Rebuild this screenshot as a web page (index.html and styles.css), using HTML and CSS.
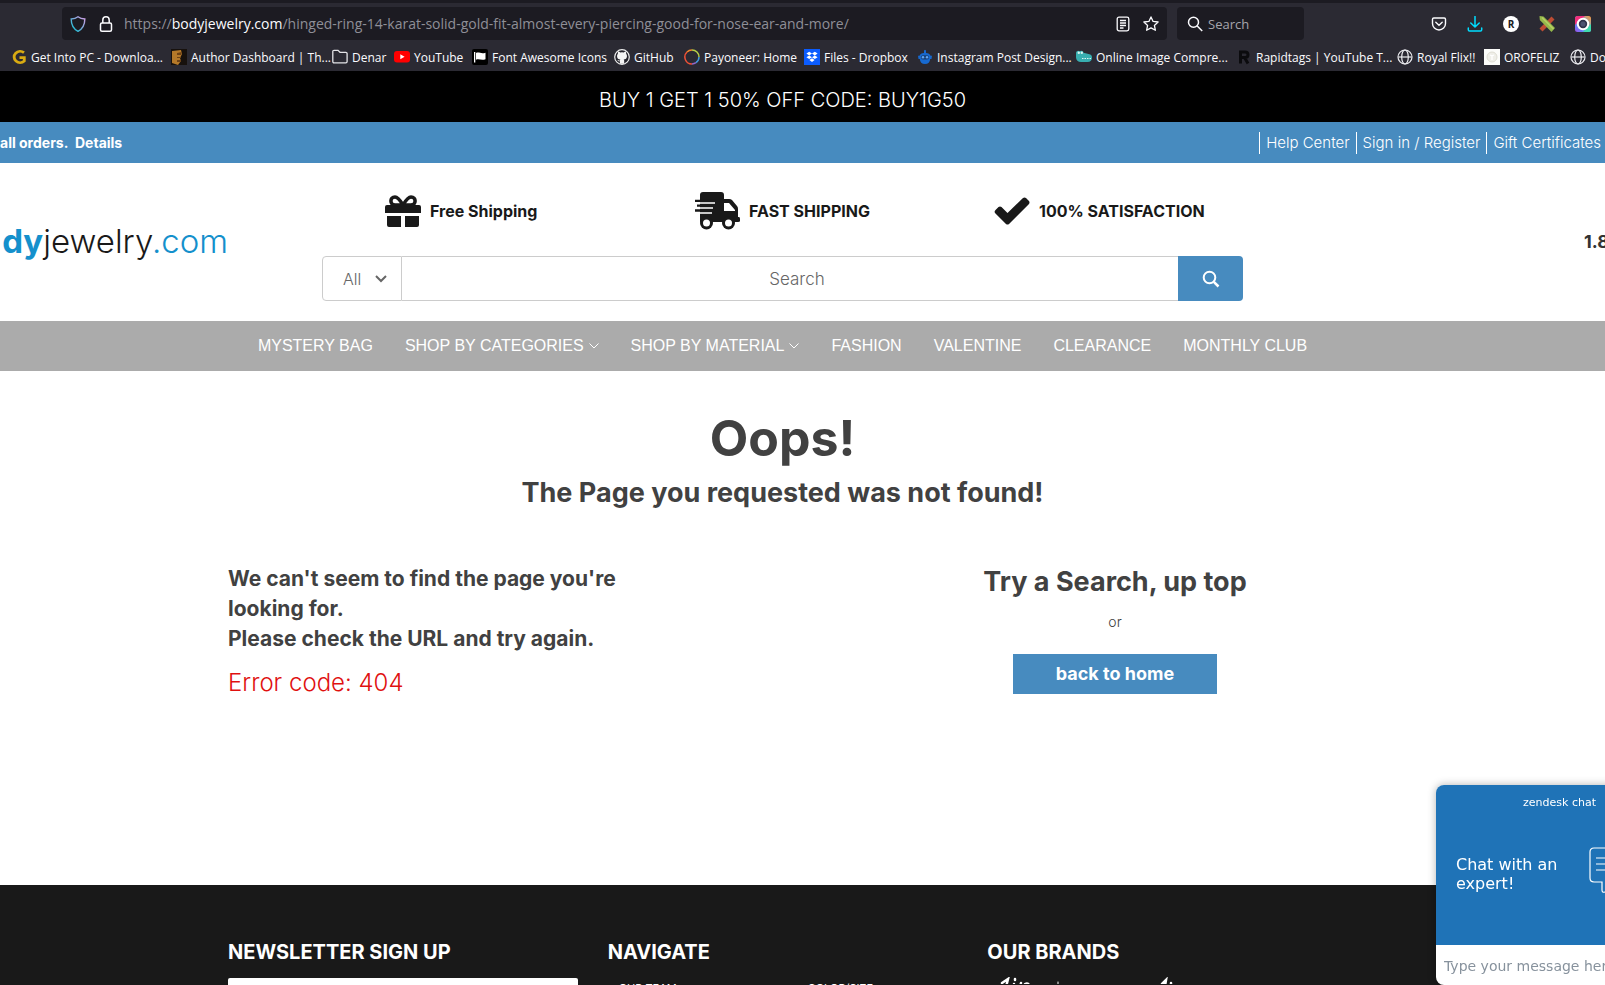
FILE: index.html
```html
<!DOCTYPE html>
<html lang="en">
<head>
<meta charset="utf-8">
<title>bodyjewelry.com - Page not found</title>
<link rel="stylesheet" href="styles.css">
</head>
<body>
<div class="browser">
  <div class="toolbar">
    <div class="urlbar">
      <svg class="i16" viewBox="0 0 16 16" fill="none" stroke-width="1.4"><defs><linearGradient id="sh" x1="0" y1="1" x2="1" y2="0"><stop offset="0" stop-color="#00c8d7"/><stop offset=".55" stop-color="#7fa8d8"/><stop offset="1" stop-color="#d9a0e8"/></linearGradient></defs><path stroke="url(#sh)" d="M8 .8C6 2.3 3.700 2.900 1.200 3c0 5.500 1.700 9.700 6.800 12.300C13.100 12.700 14.800 8.500 14.800 3 12.300 2.900 10 2.300 8 .8z"/></svg>
      <svg class="i16" viewBox="0 0 16 16" fill="none" stroke="#fbfbfe" stroke-width="1.500"><rect x="2.500" y="7" width="11" height="8.200" rx="1.500"/><path d="M4.800 7V4a3.200 3.200 0 0 1 6.400 0v3"/></svg>
      <span class="url">https://<b>bodyjewelry.com</b>/hinged-ring-14-karat-solid-gold-fit-almost-every-piercing-good-for-nose-ear-and-more/</span>
      <button class="ib" aria-label="Reader view"><svg class="i16" viewBox="0 0 16 16" fill="none" stroke="#fbfbfe" stroke-width="1.300"><rect x="2.200" y="1.200" width="11.600" height="13.600" rx="1.800"/><path d="M5 4.500h6M5 7h6M5 9.500h6M5 12h3.500"/></svg></button>
      <button class="ib" aria-label="Bookmark this page"><svg class="i16" viewBox="0 0 16 16" fill="none" stroke="#fbfbfe" stroke-width="1.300" stroke-linejoin="round"><path d="M8 .9l2.100 4.500 5 .6-3.700 3.400 1 4.900L8 11.900l-4.400 2.400 1-4.900L.9 6l5-.6z"/></svg></button>
    </div>
    <label class="quick">
      <svg class="i16" viewBox="0 0 16 16" fill="none" stroke="#fbfbfe" stroke-width="1.500"><circle cx="6.500" cy="6.300" r="5"/><path d="M10.200 10l5 5"/></svg>
      <input type="text" placeholder="Search" aria-label="Search the web">
    </label>
    <div class="tools">
      <button class="ib" aria-label="Pocket"><svg class="i16" viewBox="0 0 16 16" fill="none" stroke="#fbfbfe" stroke-width="1.400" stroke-linecap="round"><path d="M2.800 2h10.400c.8 0 1.300.5 1.300 1.300v4.200a6.500 6.500 0 0 1-13 0V3.300C1.500 2.500 2 2 2.800 2z"/><path d="M4.800 6.200L8 9.200l3.200-3"/></svg></button>
      <button class="ib" aria-label="Downloads"><svg class="i16" viewBox="0 0 16 16" fill="none" stroke="#00ddff" stroke-width="1.500" stroke-linecap="round" stroke-linejoin="round"><path d="M8 .5v10.300M3.800 7L8 11l4.200-4M1.300 12v1.800c0 .8.500 1.300 1.300 1.300h10.800c.8 0 1.300-.5 1.300-1.300V12"/></svg></button>
      <button class="ib badge" aria-label="Account">R</button>
      <button class="ib" aria-label="Design extension"><svg class="i16" viewBox="0 0 16 16"><path d="M.5 12.500L12.500.5l3 3-12 12z" fill="#bd4c33"/><path d="M.5 0l4 .5 11.500 11.500-3.500 4L.8 4z" fill="#95b84b"/><path d="M3 1.500l11.500 11.500" stroke="#b7cf62" stroke-width="1.500"/></svg></button>
      <button class="ib" aria-label="Camera extension"><svg class="i16" viewBox="0 0 16 16"><defs><linearGradient id="cam" x1="0" y1="1" x2="1" y2="0"><stop offset="0" stop-color="#a04be8"/><stop offset=".4" stop-color="#4aa2ff"/><stop offset="1" stop-color="#ff9c3b"/></linearGradient></defs><rect width="16" height="16" rx="2.500" fill="url(#cam)"/><path d="M0 9V2.500Q0 0 2.500 0H10z" fill="#f0307c"/><path d="M16 8v5.500q0 2.500-2.500 2.500H8z" fill="#3fdcae"/><circle cx="8" cy="8" r="5.200" fill="#30334c" stroke="#fff" stroke-width="2"/><circle cx="8" cy="8" r="2.500" fill="#4c5270"/></svg></button>
    </div>
  </div>
  <nav class="bookmarks" aria-label="Bookmarks">
    <a href="#"><svg class="i16" viewBox="0 0 16 16" fill="none" stroke="#d9ab12" stroke-width="2.800"><path d="M13 3.700A6 5.600 0 1 0 13.300 12V8.600H8.500"/></svg>Get Into PC - Downloa...</a>
    <a href="#"><svg class="i16" viewBox="0 0 16 16"><path fill="#17110d" d="M0 0h16v16H0z"/><path fill="#b57929" d="M1 2l9-1 1 4-2 4 1 3-3 4-6-2z"/><path fill="#6e4215" d="M6 4l5-1-1 3H6zM6 8h4v1H6zM6 11h4v2H6z"/></svg>Author Dashboard | Th...</a>
    <a href="#"><svg class="i16" viewBox="0 0 16 16" fill="none" stroke="#e4e4e8" stroke-width="1.300"><path d="M.8 4V2.500C.8 1.800 1.300 1.300 2 1.300h4l2 2h5.800c.8 0 1.300.5 1.300 1.200v8c0 .8-.5 1.300-1.300 1.300H2c-.7 0-1.200-.5-1.200-1.300z"/></svg>Denar</a>
    <a href="#"><svg class="i16" viewBox="0 0 16 16"><rect y="2" width="16" height="11.500" rx="3" fill="#f00"/><path fill="#fff" d="M6.300 5.300v5L10.600 7.800z"/></svg>YouTube</a>
    <a href="#"><svg class="i16" viewBox="0 0 16 16"><rect width="16" height="16" rx="2" fill="#000"/><path fill="#fff" d="M2 3h1.300v10.500H2zM4 4c3-1.500 5 1.400 9.500-.3v6.500C9.500 12 7 9.200 4 10.800z"/></svg>Font Awesome Icons</a>
    <a href="#"><svg class="i16" viewBox="0 0 16 16"><circle cx="8" cy="8" r="7.300" fill="#25242c" stroke="#eee" stroke-width="1.200"/><path fill="#f4f4f4" d="M5.900 14.800v-2.500c-1.700.3-2-.8-2.500-1.300 1-.2 1.300 1 2.500.6 0-.4.200-.8.500-1-2-.3-3.400-1.200-3.400-3.700 0-.9.400-1.600.9-2.200-.2-.7-.1-1.500.2-2.100.9 0 1.600.5 2.200.9a8 8 0 0 1 3.400 0c.6-.4 1.300-.9 2.200-.9.300.6.400 1.400.2 2.100.5.600.9 1.300.9 2.200 0 2.500-1.400 3.400-3.400 3.700.4.300.6.800.6 1.500v2.700z"/></svg>GitHub</a>
    <a href="#"><svg class="i16" viewBox="0 0 16 16" fill="none" stroke-width="1.500"><path stroke="#ef5136" d="M8 15A7 7 0 0 1 3 3"/><path stroke="#f0872d" d="M3 3a7 7 0 0 1 5-2"/><path stroke="#b6cf46" d="M8 1a7 7 0 0 1 7 7"/><path stroke="#419bde" d="M15 8a7 7 0 0 1-3 5.700"/><path stroke="#8f68c8" d="M12 13.700A7 7 0 0 1 8 15"/></svg>Payoneer: Home</a>
    <a href="#"><svg class="i16" viewBox="0 0 16 16"><path fill="#0b5cff" d="M0 0h16v16H0z"/><path fill="#fff" d="M5.200 2.800L8 4.600 5.200 6.400 2.400 4.600zM10.800 2.800l2.800 1.800-2.800 1.800L8 4.600zM5.200 6.400L8 8.200 5.200 10 2.400 8.200zM10.800 6.400l2.800 1.800-2.800 1.800L8 8.200zM8 9.300l2.600 1.800L8 13l-2.600-1.900z"/></svg>Files - Dropbox</a>
    <a href="#"><svg class="i16" viewBox="0 0 16 16"><path fill="#1769d0" d="M7 1.500L8 .8l1 .7V4c2.500 0 4 1.300 4.500 2.800H15L14.500 10h-1.300c-.2 3-2 5-5.200 5s-5-2-5.200-5H1.500L1 6.800h1.500C3 5.300 4.500 4 7 4z"/><rect x="4" y="6.200" width="8" height="4.200" rx="2" fill="#194178"/><circle cx="6" cy="8.300" r="1.200" fill="#5fa4f3"/><circle cx="10" cy="8.300" r="1.200" fill="#5fa4f3"/></svg>Instagram Post Design...</a>
    <a href="#"><svg class="i16" viewBox="0 0 16 16"><path fill="#38aeb0" d="M0 4c0-2 2-3 3.500-1.800C5.500 1 7.500 2 7.500 3.800l6 1.400c2 .5 2.500 1.800 2.500 3.300 0 2.800-1.500 4.500-4.500 4.500H5C2 13 0 11 0 8.500z"/><circle cx="2.800" cy="3.800" r="1.200" fill="#d9f5f2"/><circle cx="5.800" cy="3.800" r="1.200" fill="#d9f5f2"/><path d="M6 9.500h9" stroke="#d9f5f2" stroke-dasharray="1.500 1"/></svg>Online Image Compre...</a>
    <a href="#"><svg class="i16" viewBox="0 0 16 16" fill="none" stroke="#0b0b0e" stroke-width="3"><path d="M4.500 14.500V3H9c4 0 4 5.500 0 5.500H5M8.500 8.500l3.500 6"/></svg>Rapidtags | YouTube T...</a>
    <a href="#"><svg class="i16" viewBox="0 0 16 16" fill="none" stroke="#ececf0" stroke-width="1.200"><circle cx="8" cy="8" r="7"/><ellipse cx="8" cy="8" rx="3.300" ry="7"/><path d="M1.500 8h13"/></svg>Royal Flix!!</a>
    <a href="#"><svg class="i16" viewBox="0 0 16 16" fill="none"><path fill="#fcfcfa" d="M0 0h16v16H0z"/><circle cx="8" cy="8" r="5" fill="#efeee8" stroke="#dfddd3"/><path stroke="#fff" stroke-width="1.300" d="M6 6l2 1v4M8 7l2-1"/></svg>OROFELIZ</a>
    <a href="#"><svg class="i16" viewBox="0 0 16 16" fill="none" stroke="#ececf0" stroke-width="1.200"><circle cx="8" cy="8" r="7"/><ellipse cx="8" cy="8" rx="3.300" ry="7"/><path d="M1.500 8h13"/></svg>Do</a>
  </nav>
</div>

<div class="promo">BUY 1 GET 1 50% OFF CODE: BUY1G50</div>
<div class="topbar">
  <p>all orders.&nbsp; <a href="#">Details</a></p>
  <nav class="account" aria-label="Account">
    <a href="#">Help Center</a><a href="#">Sign in / Register</a><a href="#">Gift Certificates</a>
  </nav>
</div>

<header class="header">
  <a class="logo" href="#"><b>dy</b><span>jewelry</span>.com</a>
  <div class="middle">
    <ul class="perks">
      <li><svg width="36" height="32" viewBox="0 0 36 32"><path fill="#191919" d="M2 10h32q2 0 2 2v6H0v-6q0-2 2-2zM2 21h14v11H4q-2 0-2-2zM20 21h14v9q0 2-2 2H20z"/><path fill="none" stroke="#191919" stroke-width="3.500" d="M18 10C15 5 12.500 2 10 2 4.500 2 4.500 10 10 10h16c5.500 0 5.500-8 0-8-2.500 0-5 3-8 8z"/></svg>Free Shipping</li>
      <li><svg width="45" height="38" viewBox="0 0 45 38"><path fill="#191919" d="M8 0h18q3 0 3 3v4h5q2 0 3 1l5 6q1 1 1 3v8h1q1 0 1 2v2q0 1-2 1h-2H5V3q0-3 3-3z"/><circle cx="11.500" cy="31" r="6.500" fill="#191919"/><circle cx="33.500" cy="31" r="6.500" fill="#191919"/><path fill="#fff" d="M29 11h5l6 7v1H29z"/><circle cx="11.500" cy="31" r="3.500" fill="#fff"/><circle cx="33.500" cy="31" r="3.500" fill="#fff"/><path stroke="#fff" stroke-width="1.700" d="M0 11h20M0 16h18M0 21h17"/><path stroke="#191919" stroke-width="2.300" d="M0 8.800h21M2 13.600h18M0 18.500h17"/></svg>FAST SHIPPING</li>
      <li><svg width="36" height="28" viewBox="0 0 36 28"><path fill="#191919" d="M1.500 13l3-3q1.500-1 3 0l6 6L29 1q1.500-1 3 0l3 3q1 1.500 0 3L15 27q-1.500 1-3 0L1 16q-1-1.500.5-3z"/></svg>100% SATISFACTION</li>
    </ul>
    <form class="search">
      <div class="scope">
        <select aria-label="Category"><option>All</option></select>
        <svg width="12" height="8" viewBox="0 0 12 8" fill="none" stroke="#666" stroke-width="2"><path d="M1 1l5 5 5-5"/></svg>
      </div>
      <input type="search" placeholder="Search" aria-label="Search products">
      <button type="button" aria-label="Search"><svg width="18" height="18" viewBox="0 0 18 18" fill="none" stroke="#fff" stroke-width="2"><circle cx="7.500" cy="7.500" r="5.800"/><path stroke-width="2.500" d="M11.800 11.800l4.700 4.700"/></svg></button>
    </form>
  </div>
  <strong class="phone">1.8</strong>
</header>

<nav class="menu" aria-label="Main">
  <a href="#">MYSTERY BAG</a>
  <a href="#">SHOP BY CATEGORIES<svg width="10" height="6" viewBox="0 0 10 6" fill="none" stroke="#fff"><path d="M.5.5L5 5 9.500.5"/></svg></a>
  <a href="#">SHOP BY MATERIAL<svg width="10" height="6" viewBox="0 0 10 6" fill="none" stroke="#fff"><path d="M.5.5L5 5 9.500.5"/></svg></a>
  <a href="#">FASHION</a>
  <a href="#">VALENTINE</a>
  <a href="#">CLEARANCE</a>
  <a href="#">MONTHLY CLUB</a>
</nav>

<main class="main">
  <h1>Oops!</h1>
  <h2>The Page you requested was not found!</h2>
  <div class="cols">
    <section class="reason">
      <h3>We can't seem to find the page you're<br>looking for.<br>Please check the URL and try again.</h3>
      <p>Error code: 404</p>
    </section>
    <section class="next">
      <h2>Try a Search, up top</h2>
      <p>or</p>
      <a class="home" href="#">back to home</a>
    </section>
  </div>
</main>

<footer class="footer">
  <section>
    <h4>NEWSLETTER SIGN UP</h4>
    <input type="email" aria-label="Email address">
  </section>
  <section>
    <h4>NAVIGATE</h4>
    <ul class="links"><li><a href="#">OUR TEAM</a></li><li><a href="#">COLOR/SIZE</a></li></ul>
  </section>
  <section>
    <h4>OUR BRANDS</h4>
    <svg class="brand" width="190" height="7" viewBox="0 0 190 7" fill="none" stroke="#fff" stroke-width="2.500" stroke-linecap="round"><path d="M12 6l6-4-2 8M25 2v1M24 7v2M31 6l-1 4M35 7q4-2 4 3"/><path stroke-width="1" d="M68 5v4"/><path d="M172 7l4-4-1 6M181 6v3"/></svg>
  </section>
</footer>

<aside class="chat" aria-label="Chat">
  <div class="chat-top">
    <small>zendesk chat</small>
    <div class="chat-body">
      <p>Chat with an expert!</p>
      <svg width="50" height="46" viewBox="0 0 50 46" fill="none" stroke="#fff" stroke-width="1.200"><path d="M5 1h40q4 0 4 4v27q0 3-4 3H25L16 45q-3 1-3-2v-8H5q-4 0-4-4V5q0-4 4-4zM7 11h36M7 17h36M7 23h30"/></svg>
    </div>
  </div>
  <input type="text" placeholder="Type your message here" aria-label="Message">
</aside>
</body>
</html>
```
FILE: styles.css
```css
* { box-sizing: border-box; }
body {
  margin: 0;
  height: 100vh;
  overflow: hidden;
  display: flex;
  flex-direction: column;
  background: #fff;
  color: #414141;
  font-family: Inter, "Open Sans", sans-serif;
}
body > * { flex: none; }
a { color: inherit; text-decoration: none; }
h1, h2, h3, h4, p, ul { margin: 0; padding: 0; }
ul { list-style: none; }
button, input, select { font: inherit; margin: 0; border: 0; border-radius: 0; padding: 0; background: none; }
svg { flex: none; }
.i16 { display: block; width: 16px; height: 16px; }

/* browser chrome */
.browser {
  height: 71px;
  border-top: 3px solid #1c1b22;
  background: #2b2a33;
  color: #fbfbfe;
  font-family: "Open Sans", sans-serif;
  overflow: hidden;
}
.toolbar { display: flex; padding: 4px 14px 0 62px; height: 37px; }
.urlbar, .quick { display: flex; align-items: center; background: #1c1b22; border-radius: 4px; }
.urlbar { flex: 1; gap: 12px; padding: 0 8px; font-size: 14px; }
.url { flex: 1; margin-left: -2px; color: #8f8f97; white-space: nowrap; overflow: hidden; }
.url b { font-weight: 400; color: #fbfbfe; }
.quick { width: 127px; margin-left: 10px; padding: 0 10px; gap: 5px; font-size: 13px; }
.quick input { width: 80px; color: #fbfbfe; }
.quick input::placeholder { color: #a5a5ac; opacity: 1; }
.tools { display: flex; align-items: center; gap: 20px; margin-left: 127px; }
.ib { display: block; width: 16px; height: 16px; flex: none; }
.badge { border-radius: 50%; background: #fff; color: #1c1b22; font-size: 10px; font-weight: 700; line-height: 16px; }
.bookmarks {
  display: grid;
  grid-template-columns: 160px 161px 62px 78px 142px 70px 120px 113px 159px 160px 161px 87px 86px 60px;
  padding: 0 0 0 11px;
  height: 34px;
  font-size: 12px;
  white-space: nowrap;
}
.bookmarks a { display: flex; align-items: center; gap: 4px; }

/* store header */
.promo { padding-right: 40px; background: #000; color: #fff; font-size: 20px; font-weight: 300; line-height: 58px; height: 51px; text-align: center; }
.topbar { display: flex; justify-content: space-between; align-items: center; height: 41px; background: #478bbf; color: #fff; }
.topbar p { font-size: 14px; font-weight: 700; }
.account { display: flex; font-size: 15px; font-weight: 300; }
.account a { padding: 0 6px; border-left: 1px solid #fff; line-height: 22px; }
.account a:last-child { padding-right: 4px; }
.header { display: grid; grid-template-columns: 322px 1fr 362px; height: 158px; padding-top: 28px; }
.logo { justify-self: end; margin: 29px 94px 0 0; font-size: 33px; font-weight: 300; line-height: 42px; color: #1490cc; white-space: nowrap; }
.logo b { font-weight: 700; }
.logo span { color: #191919; }
.perks { display: grid; grid-template-columns: 310px 299px auto; padding: 0 0 0 63px; height: 40px; color: #191919; font-size: 16px; font-weight: 700; white-space: nowrap; }
.perks li { display: flex; align-items: center; gap: 9px; }
.search { display: flex; height: 45px; margin-top: 25px; color: #6b6b6b; font-size: 16px; font-weight: 300; }
.scope { display: flex; align-items: center; width: 80px; padding: 0 14px 0 20px; border: 1px solid #ccc; border-radius: 4px 0 0 4px; }
.scope select { flex: 1; width: 30px; appearance: none; color: #666; }
.search input { flex: 1; padding-left: 30px; border: solid #ccc; border-width: 1px 0; font-size: 17px; text-align: center; }
.search input::placeholder { color: #666; opacity: 1; }
.search button { display: grid; place-items: center; width: 65px; border-radius: 0 4px 4px 0; background: #478bbf; }
.phone { justify-self: end; margin: 39px -4px 0 0; color: #333; font-size: 18px; line-height: 24px; }
.menu { display: flex; justify-content: center; gap: 32px; height: 50px; padding: 0 40px 1px 0; background: #ababab; color: #fff; font: 16px/49px "Liberation Sans", Arial, sans-serif; }
.menu a { display: flex; align-items: center; gap: 5px; }

/* not found */
.main { height: 514px; padding-top: 39px; }
.main h1 { padding-right: 40px; font-size: 50px; line-height: 56px; text-align: center; }
.main h2 { font-size: 27px; line-height: 36px; text-align: center; }
.main > h2 { margin-top: 9px; padding-right: 40px; }
.cols { display: flex; justify-content: space-between; margin: 53px 268px 0 228px; }
.reason h3 { font-size: 21px; line-height: 30px; }
.reason p { margin-top: 11px; color: #e01010; font-size: 24px; font-weight: 300; line-height: 36px; }
.next { display: flex; flex-direction: column; align-items: center; width: 444px; }
.next p { margin: 12px 0 22px; font-size: 14px; font-weight: 300; line-height: 20px; }
.home { padding: 0 43px; background: #478bbf; color: #fff; font-size: 18px; font-weight: 700; line-height: 40px; }

/* footer */
.footer { display: grid; grid-template-columns: 1fr 1fr 1fr; column-gap: 30px; flex: 1 1 0; min-height: 0; padding: 55px 268px 0 228px; overflow: hidden; background: #191919; color: #fff; }
.footer h4 { font-size: 20px; line-height: 24px; }
.footer input { width: 100%; height: 40px; margin-top: 14px; background: #fff; border-radius: 2px; }
.links { display: grid; grid-template-columns: 189px auto; margin-top: 14px; font-size: 11px; line-height: 20px; }
.links li { display: flex; align-items: center; gap: 6px; }
.links li::before { content: ""; width: 4px; height: 4px; border: solid #fff; border-width: 1px 1px 0 0; rotate: 45deg; }
.brand { display: block; margin: 13px 0 0 3px; }

/* chat widget floats over the page corner */
.chat { position: fixed; right: -81px; bottom: 0; width: 250px; border-radius: 8px; overflow: hidden; background: #fff; box-shadow: 0 0 8px rgba(0, 0, 0, .3); color: #fff; font-family: "DejaVu Sans", Verdana, sans-serif; }
.chat-top { height: 160px; padding: 11px 90px 0 20px; background: #1f73b7; }
.chat small { display: block; font-size: 11px; line-height: 14px; text-align: right; }
.chat-body { display: flex; align-items: center; gap: 18px; margin-top: 37px; width: 190px; font-size: 16px; line-height: 19px; }
.chat-body p { width: 115px; padding-top: 8px; }
.chat input { display: block; width: 100%; height: 40px; padding: 2px 8px 0; font-size: 14px; }
.chat input::placeholder { color: #87929d; opacity: 1; }
```
